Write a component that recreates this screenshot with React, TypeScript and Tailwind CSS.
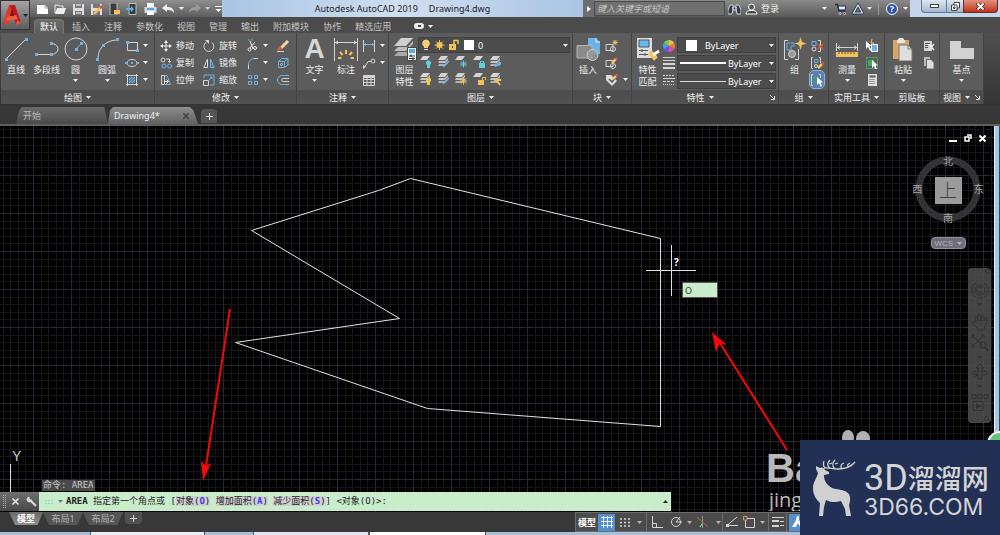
import type { ReactNode } from "react";
import clsx from "clsx";

type IconProps = { w?: number; h?: number; vw?: number; vh?: number; children: ReactNode };

const BLUE = "#6db3e8";
const GREY = "#d4d4d4";
const GOLD = "#f3c15c";

function Icon({ w = 14, h = 14, vw, vh, children }: IconProps) {
  return (
    <svg
      width={w}
      height={h}
      viewBox={`0 0 ${vw ?? w} ${vh ?? h}`}
      fill="none"
      stroke={GREY}
      className="block shrink-0"
      aria-hidden="true"
    >
      {children}
    </svg>
  );
}

function Caret({ className }: { className?: string }) {
  return (
    <svg width="5" height="3" viewBox="0 0 5 3" className={clsx("block shrink-0", className)} aria-hidden="true">
      <path d="M0 0H5L2.5 3Z" fill="currentColor" />
    </svg>
  );
}

/* ---------- Ribbon building blocks ---------- */

function Panel({
  title,
  caret = true,
  launcher = false,
  className,
  children,
}: {
  title: string;
  caret?: boolean;
  launcher?: boolean;
  className: string;
  children: ReactNode;
}) {
  return (
    <section className={clsx("flex shrink-0 flex-col border-r border-[#444] bg-[#5c5c5c]", className)}>
      <div className="flex flex-1 pt-1">{children}</div>
      <div
        className={clsx(
          "relative flex h-[14px] items-center justify-center gap-1 bg-gradient-to-b from-[#4c4c4c] to-[#525252]",
          launcher && "pr-[10px]"
        )}
      >
        <span>{title}</span>
        {caret && <Caret />}
        {launcher && (
          <svg width="5" height="5" viewBox="0 0 5 5" className="absolute right-[3px]" aria-hidden="true">
            <path d="M0 0L4 4M4.500 1V4.500H1" stroke="#ddd" fill="none" />
          </svg>
        )}
      </div>
    </section>
  );
}

function BigButton({
  label,
  label2,
  caret,
  className,
  children,
}: {
  label: string;
  label2?: string;
  caret?: boolean;
  className: string;
  children: ReactNode;
}) {
  return (
    <button type="button" className={clsx("flex shrink-0 flex-col items-center", className)}>
      {children}
      <span className="mt-[3px] leading-[12px]">{label}</span>
      {label2 && <span className="leading-[12px]">{label2}</span>}
      {caret && <Caret className="mt-[3px]" />}
    </button>
  );
}

function SmallButton({
  name,
  text,
  caret,
  active,
  children,
}: {
  name: string;
  text?: boolean;
  caret?: boolean;
  active?: boolean;
  children: ReactNode;
}) {
  return (
    <button
      type="button"
      aria-label={name}
      className={clsx(
        "flex h-[17px] items-center gap-1",
        active && "rounded-sm bg-[#5b7fb5] outline outline-1 outline-[#8eb0dc]"
      )}
    >
      {children}
      {text && <span>{name}</span>}
      {caret && <Caret />}
    </button>
  );
}

/* ---------- Title bar ---------- */

function QuickAccess() {
  return (
    <div className="flex w-[192px] shrink-0 items-center gap-[5px] bg-gradient-to-b from-[#8f8f8f] to-[#5d5d5d] pl-[6px]">
      <button type="button" aria-label="新建">
        <Icon w={13} h={12}>
          <path d="M1 2H9L12 5V11H1Z" fill="#fff" stroke="none" />
          <path d="M9 2V5H12" stroke="#999" />
        </Icon>
      </button>
      <button type="button" aria-label="打开">
        <Icon w={13} h={12}>
          <path d="M1 10V2H4L5 3H9V5" stroke="#eee" />
          <path d="M3 5H12L10 11H1Z" fill="#eee" stroke="none" />
        </Icon>
      </button>
      <button type="button" aria-label="保存">
        <Icon w={13} h={12}>
          <path d="M1 1H12V12H1Z" fill="#dedede" stroke="none" />
          <path d="M3 1H10V5H3ZM3 8H10V12H3Z" fill="#777" stroke="none" />
          <path d="M4 2H9M4 10H9" stroke="#fff" />
        </Icon>
      </button>
      <button type="button" aria-label="另存为">
        <Icon w={13} h={12}>
          <path d="M1 1H12V12H1Z" fill="#dedede" stroke="none" />
          <path d="M3 1H10V5H3ZM3 8H10V12H3Z" fill="#777" stroke="none" />
          <path d="M4 11L11 4" stroke={GOLD} strokeWidth="2.500" />
          <path d="M10 5L12 3" stroke="#e0503c" strokeWidth="2.500" />
        </Icon>
      </button>
      <button type="button" aria-label="从移动设备打开">
        <Icon w={13} h={12}>
          <path d="M2 0H9V12H2Z" fill="#3c3c3c" stroke="#bbb" />
          <path d="M6 7H12V11H6Z" fill={GOLD} stroke="none" />
        </Icon>
      </button>
      <button type="button" aria-label="保存到移动设备">
        <Icon w={13} h={12}>
          <path d="M3 0.500H10V11.500H3Z" fill="#3c3c3c" stroke="#bbb" />
          <path d="M0 5H5V3L8 6L5 9V7H0Z" fill="#58b2f5" stroke="none" />
        </Icon>
      </button>
      <button type="button" aria-label="打印">
        <Icon w={13} h={12}>
          <path d="M3 0H10V4H3Z" fill="#fff" stroke="none" />
          <path d="M0.500 4H12.500V10H0.500Z" fill="#d9d9d9" stroke="none" />
          <path d="M3 5H10V7H3Z" fill="#4fa6e8" stroke="none" />
          <path d="M3 8H10V12H3Z" fill="#fff" stroke="none" />
        </Icon>
      </button>
      <button type="button" aria-label="放弃" className="flex items-center gap-1 text-white">
        <Icon w={13} h={12}>
          <path d="M0 5L5 1V4C9 4 12 5 12 10C10 7 8 7 5 7V9Z" fill="#eee" stroke="none" />
        </Icon>
        <Caret />
      </button>
      <button type="button" aria-label="重做" className="flex items-center gap-1 text-[#ccc]">
        <Icon w={12} h={12}>
          <path d="M12 5L7 1V4C3 4 0 5 0 10C2 7 4 7 7 7V9Z" fill="#9a9a9a" stroke="none" />
        </Icon>
        <Caret />
      </button>
      <button type="button" aria-label="自定义快速访问工具栏">
        <Icon w={7} h={8}>
          <path d="M0 1.500H7" stroke="#fff" />
          <path d="M0.500 4H6.500L3.500 7Z" fill="#fff" stroke="none" />
        </Icon>
      </button>
    </div>
  );
}

function InfoCenter() {
  return (
    <div className="flex w-[327px] shrink-0 items-center whitespace-nowrap bg-gradient-to-b from-[#8a8a8a] to-[#5a5a5a] text-[#f0f0f0]">
      <button type="button" aria-label="折叠搜索" className="flex h-full w-[11px] shrink-0 items-center justify-center bg-[#6d6d6d]">
        <Icon w={4} h={6}>
          <path d="M0 0L4 3L0 6Z" fill="#fff" stroke="none" />
        </Icon>
      </button>
      <input
        aria-label="搜索"
        placeholder="键入关键字或短语"
        className="h-[15px] w-[131px] shrink-0 border border-[#4a4a4a] bg-[#707070] px-[2px] text-[9px] italic placeholder:text-[#c6c6c6]"
      />
      <button type="button" aria-label="查找" className="ml-[3px]">
        <Icon w={13} h={12}>
          <path d="M2 2H5V6L4 11H0V7ZM8 2H11L13 7V11H9L8 6ZM5 4H8V7H5Z" fill="#343b4c" stroke="#d0d4dc" />
        </Icon>
      </button>
      <button type="button" className="ml-1 flex items-center gap-[3px]">
        <Icon w={13} h={12}>
          <circle cx="6.500" cy="4" r="3" fill="#555" stroke="#fff" />
          <path d="M1 11C1 8 3 7.500 6.500 7.500S12 8 12 11Z" fill="#444" stroke="#fff" />
        </Icon>
        登录
        <Caret className="ml-10" />
      </button>
      <button type="button" aria-label="应用商店" className="ml-2">
        <Icon w={12} h={12}>
          <path d="M0 1.500H2.500L4 8H10.500" stroke="#25304a" strokeWidth="1.500" />
          <path d="M3 3H11L10 7H4Z" fill="#dfe4ee" stroke="#25304a" />
          <circle cx="5" cy="10.500" r="1" fill="#25304a" />
          <circle cx="9.500" cy="10.500" r="1" fill="#25304a" />
        </Icon>
      </button>
      <button type="button" aria-label="保持连接" className="ml-[5px] flex items-center gap-[3px]">
        <Icon w={12} h={12}>
          <path d="M6 2L10.500 10H1.500Z" stroke="#2c3854" strokeWidth="3" />
          <path d="M6 2L10.500 10H1.500Z" stroke="#e6e9f0" strokeWidth="1.200" />
        </Icon>
        <Caret />
      </button>
      <span className="ml-[6px] h-3 w-px bg-[#999]" />
      <button type="button" aria-label="帮助" className="ml-[7px] flex items-center gap-[5px]">
        <span className="flex h-[12px] w-[12px] items-center justify-center rounded-full border border-white bg-[#2a55a8] text-[9px] font-bold leading-none text-white">
          ?
        </span>
        <Caret />
      </button>
    </div>
  );
}

function WindowControls() {
  return (
    <div className="flex w-[90px] shrink-0 items-start justify-end bg-[#c3d6ec] pr-[2px]">
      <button type="button" aria-label="最小化" className="flex h-[13px] w-[26px] items-center justify-center rounded-bl border border-t-0 border-[#66788c] bg-gradient-to-b from-[#dde8f4] to-[#a3b8cf]">
        <span className="h-[4px] w-[9px] border border-[#444] bg-white" />
      </button>
      <button type="button" aria-label="还原" className="flex h-[13px] w-[16px] items-center justify-center border-b border-[#66788c] bg-gradient-to-b from-[#dde8f4] to-[#a3b8cf]">
        <Icon w={9} h={9}>
          <path d="M3 0.500H8.500V6H3Z" fill="#fff" stroke="#444" />
          <path d="M0.500 3H6V8.500H0.500Z" fill="#fff" stroke="#444" />
          <path d="M2.500 5H4V6.500H2.500Z" stroke="#444" />
        </Icon>
      </button>
      <button type="button" aria-label="关闭" className="flex h-[13px] w-[35px] items-center justify-center rounded-br border border-t-0 border-[#6b2b22] bg-gradient-to-b from-[#e0917c] to-[#bd2f18]">
        <Icon w={9} h={7}>
          <path d="M1 0L8 7M8 0L1 7" stroke="#5c2a26" strokeWidth="3.500" />
          <path d="M1.500 0.500L7.500 6.500M7.500 0.500L1.500 6.500" stroke="#fff" strokeWidth="2" />
        </Icon>
      </button>
    </div>
  );
}

const ribbonTabs = ["插入", "注释", "参数化", "视图", "管理", "输出", "附加模块", "协作", "精选应用"];

function Header() {
  return (
    <header className="flex h-[33px] bg-[#4b4b4b]">
      <button
        type="button"
        aria-label="应用程序菜单"
        className="flex h-[30px] w-[30px] shrink-0 items-center justify-center gap-[1px] border border-[#333] bg-gradient-to-b from-[#a5a5a5] to-[#5e5e5e] text-[#222]"
      >
        <svg width="19" height="21" viewBox="0 0 19 21" aria-hidden="true">
          <path d="M6 0H11L5 20L0 18Z" fill="#e0392b" />
          <path d="M7 0H12L18 18L13 20Z" fill="#b81f1c" />
          <path d="M4 12L13 10L15 14L3 16Z" fill="#ee5a45" />
          <path d="M9 4L7 11H11Z" fill="#7d1212" />
          <path d="M13 20L18 18L14 15Z" fill="#e8604c" />
        </svg>
        <Caret />
      </button>
      <div className="flex min-w-0 flex-1 flex-col">
        <div className="flex h-[17px]">
          <QuickAccess />
          <div className="flex flex-1 items-center justify-center gap-[11px] whitespace-nowrap bg-gradient-to-r from-[#a9c4e4] via-[#cfdff1] to-[#a9c4e4] text-[#1c1c1c]">
            <span>Autodesk AutoCAD 2019</span>
            <span>Drawing4.dwg</span>
          </div>
          <InfoCenter />
          <WindowControls />
        </div>
        <nav className="flex h-4 items-end gap-[14px] pl-1 text-[#c4c4c4]">
          <button type="button" className="-mr-[6px] h-[14px] rounded-t-sm border border-b-0 border-[#777] bg-gradient-to-b from-[#6c6c6c] to-[#5c5c5c] px-[5px] text-white">
            默认
          </button>
          {ribbonTabs.map((tab) => (
            <button key={tab} type="button" className="h-[14px]">
              {tab}
            </button>
          ))}
          <button type="button" aria-label="最小化功能区" className="ml-[9px] flex h-[14px] items-center gap-1 text-white">
            <span className="flex h-[6px] w-[10px] items-center justify-center rounded-sm bg-[#eee]">
              <span className="h-[2px] w-[3px] bg-[#444]" />
            </span>
            <Caret />
          </button>
        </nav>
      </div>
    </header>
  );
}

/* ---------- Ribbon panels ---------- */

function DrawPanel() {
  return (
    <Panel title="绘图" className="w-[154px]">
      <BigButton label="直线" className="w-[30px]">
        <Icon w={24} h={24}>
          <path d="M2 22L22 2" />
          <path d="M1 21h3v3H1ZM21 1h3v3h-3Z" fill={BLUE} stroke="none" />
        </Icon>
      </BigButton>
      <BigButton label="多段线" className="w-[31px]">
        <Icon w={24} h={24}>
          <path d="M1 17.500H16C20 17.500 23 15 23 12S20 6.500 16 6.500" />
          <path d="M0 16h3v3H0ZM15 16h3v3h-3ZM15 5h3v3h-3Z" fill={BLUE} stroke="none" />
        </Icon>
      </BigButton>
      <BigButton label="圆" caret className="w-[27px]">
        <Icon w={24} h={24}>
          <circle cx="12" cy="12" r="11" />
          <path d="M12 12L17 7" stroke={BLUE} />
          <path d="M11 11h3v3h-3ZM16 5h3v3h-3Z" fill={BLUE} stroke="none" />
        </Icon>
      </BigButton>
      <BigButton label="圆弧" caret className="w-[36px]">
        <Icon w={24} h={24}>
          <path d="M3 21C3 11 11 3 22 3" />
          <path d="M1 21h3v3H1ZM7 7h3v3H7ZM21 1h3v3h-3Z" fill={BLUE} stroke="none" />
        </Icon>
      </BigButton>
      <div className="flex flex-col">
        <SmallButton name="矩形" caret>
          <Icon>
            <path d="M2.500 3.500H12.500V11.500H2.500Z" />
            <path d="M1 2h3v3H1ZM11 10h3v3h-3Z" fill={BLUE} stroke="none" />
          </Icon>
        </SmallButton>
        <SmallButton name="椭圆" caret>
          <Icon>
            <ellipse cx="7" cy="7" rx="5" ry="3.500" />
            <path d="M0 6h2v2H0ZM12 6h2v2h-2ZM6 6h2v2H6Z" fill={BLUE} stroke="none" />
          </Icon>
        </SmallButton>
        <SmallButton name="图案填充" caret>
          <Icon>
            <path d="M1 2.500H13M1 11.500H13M2.500 1V13M11.500 1V13" />
            <path d="M4 4H10V10H4Z" fill="#4d86b5" stroke="none" />
            <path d="M4 7L7 4M4 10L10 4M7 10L10 7" stroke={BLUE} />
          </Icon>
        </SmallButton>
      </div>
    </Panel>
  );
}

function ModifyPanel() {
  return (
    <Panel title="修改" className="w-[142px]">
      <div className="ml-[5px] flex w-[43px] flex-col">
        <SmallButton name="移动" text>
          <Icon w={12} h={12}>
            <path d="M6 1V11M1 6H11" stroke="#eee" />
            <path d="M6 0L8 3H4ZM6 12L8 9H4ZM0 6L3 4V8ZM12 6L9 4V8Z" fill="#eee" stroke="none" />
          </Icon>
        </SmallButton>
        <SmallButton name="复制" text>
          <Icon w={12} h={12}>
            <circle cx="3" cy="3" r="2" />
            <circle cx="4" cy="9" r="2" stroke={BLUE} />
            <circle cx="9.500" cy="9" r="2" stroke={BLUE} />
            <path d="M6 2H9.500V5M8 4L9.500 5.500L11 4" />
          </Icon>
        </SmallButton>
        <SmallButton name="拉伸" text>
          <Icon w={12} h={12}>
            <path d="M1.500 1.500H4.500V10.500H1.500Z" />
            <path d="M5 1.500H7L10.500 10.500H4" stroke={BLUE} />
            <path d="M4 7.500H8M6.500 5.500L8.500 7.500L6.500 9.500" stroke="#eee" />
          </Icon>
        </SmallButton>
      </div>
      <div className="flex w-[42px] flex-col">
        <SmallButton name="旋转" text>
          <Icon w={12} h={12}>
            <path d="M9 2.500A5 5 0 1 1 3.500 2" />
            <path d="M2 0H6V4Z" fill={GREY} stroke="none" />
          </Icon>
        </SmallButton>
        <SmallButton name="镜像" text>
          <Icon w={12} h={12}>
            <path d="M4.500 2V10.500H0.800Z" />
            <path d="M7.500 2V10.500H11.200Z" stroke={BLUE} fill="#3f7fb5" />
          </Icon>
        </SmallButton>
        <SmallButton name="缩放" text>
          <Icon w={12} h={12}>
            <path d="M1 4V1H11V11H7" stroke={BLUE} />
            <path d="M0.500 6.500H5.500V11.500H0.500Z" />
            <path d="M6 6L9 3M7 3H9V5" stroke={BLUE} />
          </Icon>
        </SmallButton>
      </div>
      <div className="flex w-[31px] flex-col">
        <SmallButton name="修剪" caret>
          <Icon>
            <path d="M3 1H8" stroke={BLUE} strokeDasharray="2 1" />
            <path d="M5 2L8 10M10 3L5 9" stroke="#eee" />
            <circle cx="4.500" cy="10.500" r="1.500" stroke="#eee" />
            <circle cx="10" cy="9" r="1.500" stroke="#eee" />
          </Icon>
        </SmallButton>
        <SmallButton name="圆角" caret>
          <Icon>
            <path d="M3.500 13V9" />
            <path d="M3.500 9C3.500 5 6 2.500 9 2.500" stroke={BLUE} />
            <path d="M9 2.500H13" />
          </Icon>
        </SmallButton>
        <SmallButton name="阵列" caret>
          <Icon>
            <path d="M3.500 2.500h3v3h-3ZM9.500 2.500h3v3h-3ZM3.500 8.500h3v3h-3ZM9.500 8.500h3v3h-3Z" stroke={BLUE} />
          </Icon>
        </SmallButton>
      </div>
      <div className="flex flex-col">
        <SmallButton name="删除">
          <Icon>
            <path d="M5 9L12 2" stroke="#f0d9a0" strokeWidth="3" />
            <path d="M2 11L5 8" stroke="#e2563f" strokeWidth="3" />
            <path d="M1 12.500H8" />
          </Icon>
        </SmallButton>
        <SmallButton name="分解">
          <Icon>
            <path d="M2.500 5.500H8.500V11.500H2.500Z" stroke={BLUE} />
            <path d="M2.500 5.500L5.500 2.500H12V9L8.500 11.500M8.500 5.500L12 2.500" stroke={BLUE} />
            <circle cx="5.500" cy="8.500" r="1" />
          </Icon>
        </SmallButton>
        <SmallButton name="偏移">
          <Icon>
            <path d="M13 2.500H6C3 2.500 1.500 5 1.500 7S3 11.500 6 11.500H13" stroke={BLUE} />
            <path d="M13 5.500H7C5 5.500 5 8.500 7 8.500H13" />
          </Icon>
        </SmallButton>
      </div>
    </Panel>
  );
}

function AnnotatePanel() {
  return (
    <Panel title="注释" className="w-[92px]">
      <BigButton label="文字" caret className="ml-[2px] w-[31px]">
        <span className="h-[24px] font-['Liberation_Sans',sans-serif] text-[28px] font-bold leading-[24px] text-[#d6d6d6]">A</span>
      </BigButton>
      <BigButton label="标注" className="w-[32px]">
        <Icon w={24} h={24}>
          <path d="M0.500 1V24M23.500 1V24M1 5.500H23" />
          <path d="M1 5.500L4 3.500V7.500ZM23 5.500L20 3.500V7.500Z" fill={GREY} stroke="none" />
          <path d="M12 13V17M6 15L8.500 18M18 15L15.500 18M4 21H7.500M16.500 21H20" stroke={GOLD} strokeWidth="2" />
        </Icon>
      </BigButton>
      <div className="flex flex-col">
        <SmallButton name="线性" caret>
          <Icon>
            <path d="M1.500 1V13M12.500 1V13" />
            <path d="M2 5.500H12M4 4L2.500 5.500L4 7M10 4L11.500 5.500L10 7" stroke={BLUE} />
          </Icon>
        </SmallButton>
        <SmallButton name="引线" caret>
          <Icon>
            <path d="M2 12L6 5.500H9" />
            <circle cx="11" cy="5" r="2" />
            <path d="M1 13V9L4 11Z" fill={GREY} stroke="none" />
          </Icon>
        </SmallButton>
        <SmallButton name="表格">
          <Icon>
            <path d="M1.500 2.500H12.500V12.500H1.500ZM1.500 6.500H12.500M1.500 9.500H12.500M5 5V12M9 5V12" />
            <path d="M1 2H13V5H1Z" fill={GREY} stroke="none" />
          </Icon>
        </SmallButton>
      </div>
    </Panel>
  );
}

function LayerGlyph({ kind }: { kind: string }) {
  const stacked = kind === "match" || kind === "on" || kind === "thaw" || kind === "current" || kind === "previous";
  return (
    <Icon>
      <path d="M4 1H11L8 5H1Z" fill={GREY} stroke="none" />
      {stacked && (
        <>
          <path d="M2 6H8L11 3V5L8 8H1Z" fill="#c4c4c4" stroke="none" />
          <path d="M2 9H8L11 6V8L8 11H1Z" fill="#b4b4b4" stroke="none" />
        </>
      )}
      {kind === "off" && <path d="M8 10a2.500 2.500 0 1 1 3 0v3h-3v-3Z" fill="#5fd0e0" stroke="none" />}
      {kind === "on" && <path d="M8 10a2.500 2.500 0 1 1 3 0v3h-3v-3Z" fill={GOLD} stroke="none" />}
      {kind === "freeze" && <path d="M9.500 5.500V12.500M6 9H13M7 6.500L12 11.500M12 6.500L7 11.500" stroke="#5fd0e0" />}
      {kind === "thaw" && <path d="M9.500 5.500V12.500M6 9H13M7 6.500L12 11.500M12 6.500L7 11.500" stroke={GOLD} />}
      {kind === "lock" && (
        <>
          <path d="M7 8H13V13H7Z" fill="#5fd0e0" stroke="none" />
          <path d="M8.500 8V6.500H11.500V8" stroke="#5fd0e0" />
        </>
      )}
      {kind === "unlock" && (
        <>
          <path d="M6 8H12V13H6Z" fill={GOLD} stroke="none" />
          <path d="M10.500 8V5.500H13.500V8" stroke={GOLD} />
        </>
      )}
      {kind === "match" && <path d="M6 12L12 6" stroke={BLUE} strokeWidth="1.500" />}
      {kind === "current" && <path d="M5 9L12 7V10L6 12Z" fill={BLUE} stroke="none" />}
      {kind === "previous" && <path d="M5 8H12M8 9L11 13" stroke={GOLD} strokeWidth="2" />}
    </Icon>
  );
}

const layerTools = [
  { name: "关闭", kind: "off" },
  { name: "隔离", kind: "match" },
  { name: "冻结", kind: "freeze" },
  { name: "锁定", kind: "lock" },
  { name: "置为当前", kind: "current" },
  { name: "打开所有图层", kind: "on" },
  { name: "取消隔离", kind: "match" },
  { name: "解冻所有图层", kind: "thaw" },
  { name: "解锁", kind: "unlock" },
  { name: "匹配图层", kind: "previous" },
];

function LayersPanel() {
  return (
    <Panel title="图层" className="w-[184px]">
      <BigButton label="图层" label2="特性" className="ml-[2px] w-[27px]">
        <Icon w={24} h={24}>
          <path d="M8 1H20L13 9H1Z" fill="#cfcfcf" stroke="none" />
          <path d="M5 10H15L20 4V7L13 14H1Z" fill="#bdbdbd" stroke="none" />
          <path d="M5 15H14V19H1Z" fill="#a9a9a9" stroke="none" />
          <path d="M14.500 10.500H23.500V23.500H14.500Z" fill="#eee" stroke="#444" />
          <path d="M16 12H22V16H16Z" fill="#58a9ee" stroke="none" />
          <path d="M16 19H22M18 17.500V20M16 21.500H22M20 20.500V23" stroke="#333" />
        </Icon>
      </BigButton>
      <div className="flex flex-1 flex-col">
        <div className="relative mr-[2px] h-[16px]">
          <select
            aria-label="图层"
            className="h-full w-full appearance-none border border-[#404040] bg-[#4c4c4c] pl-[59px] text-[9px] text-white"
          >
            <option>0</option>
          </select>
          <div className="pointer-events-none absolute inset-0 flex items-center gap-[3px] pl-[3px] pr-[2px]">
            <Icon w={10} h={12}>
              <path d="M5 0.500a3.800 3.800 0 0 1 2 7V9H3V7.500A3.800 3.800 0 0 1 5 0.500Z" fill="#fbcf73" stroke="none" />
              <path d="M3 10.500H7" />
            </Icon>
            <Icon w={11} h={12}>
              <circle cx="5.500" cy="6" r="3" fill={GOLD} stroke="none" />
              <path d="M5.500 1V11M0.500 6H10.500M2 2.500L9 9.500M9 2.500L2 9.500" stroke={GOLD} />
            </Icon>
            <Icon w={11} h={12}>
              <path d="M1 5H8V11H1Z" fill={GOLD} stroke="none" />
              <path d="M6 5V1.500H10V5" stroke={GOLD} strokeWidth="1.500" />
              <path d="M4.500 7V9" stroke="#444" />
            </Icon>
            <span className="ml-[2px] h-[10px] w-[10px] bg-white" />
            <span className="flex-1" />
            <Caret />
          </div>
        </div>
        <div className="grid w-[89px] grid-cols-5 pl-px">
          {layerTools.map((tool) => (
            <SmallButton key={tool.name} name={tool.name}>
              <LayerGlyph kind={tool.kind} />
            </SmallButton>
          ))}
        </div>
      </div>
    </Panel>
  );
}

function BlockPanel() {
  return (
    <Panel title="块" className="w-[59px]">
      <BigButton label="插入" className="ml-[2px] w-[26px]">
        <Icon w={24} h={24}>
          <path d="M12 1H20L24 5V17H12Z" fill={BLUE} stroke="none" />
          <path d="M20 1V5H24" stroke="#d7ecfb" />
          <path d="M1 8.500H16V21H1Z" fill="#8a8a8a" stroke="#b5b5b5" />
          <circle cx="16.500" cy="18" r="5.500" fill="#9a9a9a" fillOpacity="0.800" stroke="#ccc" />
        </Icon>
      </BigButton>
      <div className="ml-[4px] flex flex-col">
        <SmallButton name="创建">
          <Icon>
            <path d="M1 5.500H8V11.500H1Z" />
            <circle cx="8" cy="10" r="2.500" />
            <path d="M10 1V6M7.500 3.500H12.500M8 1.500L12 5.500M12 1.500L8 5.500" stroke={GOLD} />
          </Icon>
        </SmallButton>
        <SmallButton name="编辑">
          <Icon>
            <path d="M1 4.500H8V10.500H1Z" />
            <circle cx="8" cy="10" r="2.500" />
            <path d="M7 7L11 3" stroke={GOLD} strokeWidth="2.500" />
            <path d="M10.500 3.500L12 2" stroke="#e2563f" strokeWidth="2.500" />
          </Icon>
        </SmallButton>
        <SmallButton name="编辑属性" caret>
          <Icon>
            <path d="M1 2H6L12 8L7 13L1 7Z" fill="#ddd" stroke="none" />
            <path d="M4 6L7 9L12 3" stroke="#555" strokeWidth="1.500" />
            <path d="M8 6L11 3" stroke={GOLD} strokeWidth="2.500" />
            <path d="M11 3L12.500 1.500" stroke="#e2563f" strokeWidth="2.500" />
          </Icon>
        </SmallButton>
      </div>
    </Panel>
  );
}

function PropertySelect({ name, line }: { name: string; line?: string }) {
  return (
    <div className="relative h-[16px]">
      <select
        aria-label={name}
        className={clsx(
          "h-full w-full appearance-none border border-[#404040] bg-[#4c4c4c] text-[9px] text-white",
          line ? "pl-[50px]" : "pl-[27px]"
        )}
      >
        <option>ByLayer</option>
      </select>
      <div className="pointer-events-none absolute inset-0 flex items-center justify-between pl-[3px] pr-[2px]">
        {line ? <span className={clsx("w-[46px]", line)} /> : <span className="ml-[6px] h-[11px] w-[11px] bg-white" />}
        <Caret />
      </div>
    </div>
  );
}

function PropertiesPanel() {
  return (
    <Panel title="特性" launcher className="w-[147px]">
      <BigButton label="特性" label2="匹配" className="ml-[3px] w-[25px]">
        <Icon w={24} h={24}>
          <path d="M1 1H16V21H1Z" fill="#dcdcdc" stroke="none" />
          <path d="M3 3H13V10H3Z" fill="#69b7f2" stroke="#555" />
          <path d="M3 13.500H12M3 17.500H12M6 12V15M9 16V19" stroke="#555" />
          <path d="M14 15L20 22" stroke={GOLD} strokeWidth="5" />
          <path d="M17 18L23 14" stroke="#fff" strokeWidth="3" />
        </Icon>
      </BigButton>
      <div className="flex w-[17px] flex-col items-center">
        <SmallButton name="颜色">
          <Icon w={12} h={12}>
            <path d="M6 6V0A6 6 0 0 1 11.200 3Z" fill="#f5c23d" stroke="none" />
            <path d="M6 6L11.200 3A6 6 0 0 1 11.200 9Z" fill="#ee7d37" stroke="none" />
            <path d="M6 6L11.200 9A6 6 0 0 1 6 12Z" fill="#dc4dae" stroke="none" />
            <path d="M6 6V12A6 6 0 0 1 0.800 9Z" fill="#6d55e0" stroke="none" />
            <path d="M6 6L0.800 9A6 6 0 0 1 0.800 3Z" fill="#39a5e8" stroke="none" />
            <path d="M6 6L0.800 3A6 6 0 0 1 6 0Z" fill="#6ccb51" stroke="none" />
          </Icon>
        </SmallButton>
        <SmallButton name="线宽">
          <Icon w={12} h={12}>
            <path d="M0 0.500H12M0 3.500H12" />
            <path d="M0 7H12M0 11H12" strokeWidth="2" />
          </Icon>
        </SmallButton>
        <SmallButton name="线型">
          <Icon w={12} h={12}>
            <path d="M0 1.500H12" strokeDasharray="2 1" />
            <path d="M0 4.500H12" />
            <path d="M0 7.500H12" strokeDasharray="3 1" />
            <path d="M0 10.500H12" strokeDasharray="1 1" />
          </Icon>
        </SmallButton>
      </div>
      <div className="mr-[2px] flex flex-1 flex-col gap-[2px]">
        <PropertySelect name="对象颜色" />
        <PropertySelect name="线宽" line="h-[2px] bg-white" />
        <PropertySelect name="线型" line="h-px bg-[#ddd]" />
      </div>
    </Panel>
  );
}

function TrailingPanels() {
  return (
    <>
      <Panel title="组" className="w-[50px]">
        <BigButton label="组" className="ml-[3px] w-[25px]">
          <Icon w={24} h={24}>
            <path d="M5 3.500H1.500V22.500H5M12 22.500H15.500V12" />
            <path d="M4 6H11V9H8V13H4Z" stroke={BLUE} />
            <circle cx="9" cy="17" r="3.500" fill="#999" />
            <path d="M17.500 0L19 5L23.500 6.500L19 8L17.500 13L16 8L11.500 6.500L16 5Z" fill={GOLD} stroke="none" />
          </Icon>
        </BigButton>
        <div className="ml-[3px] flex flex-col">
          <SmallButton name="解除编组">
            <Icon>
              <path d="M2 2.500h4v4H2Z" stroke={BLUE} />
              <circle cx="4" cy="10" r="2" />
              <path d="M8 1.500H10.500V12.500H8" />
              <path d="M8 5L13 10M13 5L8 10" stroke="#e2563f" strokeWidth="1.500" />
            </Icon>
          </SmallButton>
          <SmallButton name="组编辑">
            <Icon>
              <path d="M3 1.500H1.500V12.500H3M9 1.500H10.500V7" />
              <path d="M4.500 3.500H8V6.500H4.500Z" stroke={BLUE} />
              <circle cx="6" cy="10" r="1.500" />
              <path d="M8 12L12 8" stroke={GOLD} strokeWidth="2.500" />
              <path d="M12 8L13.500 6.500" stroke="#e2563f" strokeWidth="2.500" />
            </Icon>
          </SmallButton>
          <SmallButton name="启用组选择" active>
            <Icon>
              <path d="M3 1.500H1.500V12.500H3M9 1.500H10.500V5" />
              <path d="M4 3H8V6H4ZM4 8H7V11H4Z" fill="#3fa35c" stroke="none" />
              <path d="M7 4V12L9 10L10.500 13.500L12 13L10.500 9.500H13Z" fill="#fff" stroke="none" />
            </Icon>
          </SmallButton>
        </div>
      </Panel>
      <Panel title="实用工具" className="w-[56px]">
        <BigButton label="测量" caret className="ml-[4px] w-[28px]">
          <Icon w={24} h={24}>
            <path d="M1.500 6V14M22.500 6V14M2 10.500H22M5 8.500L2.500 10.500L5 12.500M19 8.500L21.500 10.500L19 12.500" />
            <path d="M1 15H23V20H1Z" fill={GOLD} stroke="none" />
            <path d="M4 15V17M7 15V17M10 15V17M13 15V17M16 15V17M19 15V17" stroke="#6b552a" />
          </Icon>
        </BigButton>
        <div className="ml-[4px] flex flex-col">
          <SmallButton name="快速选择">
            <Icon>
              <path d="M1 2V10L3 8L5 12L6.500 11L4.500 7H7Z" fill="#fff" stroke="none" />
              <path d="M6.500 5.500H12.500V12.500H6.500Z" fill={BLUE} stroke="#fff" />
              <path d="M7 0L6 4H9L7 6" stroke={GOLD} />
            </Icon>
          </SmallButton>
          <SmallButton name="全部选择">
            <Icon>
              <path d="M1.500 1.500H12.500V12.500H1.500Z" stroke="#45bd68" strokeDasharray="2 1" />
              <path d="M3 4H9V10H3Z" fill="#45a862" stroke="none" />
              <path d="M7 4V12L9 10L10 13H12L10.500 9.500H13Z" fill="#fff" stroke="none" />
            </Icon>
          </SmallButton>
          <SmallButton name="快速计算器">
            <Icon>
              <path d="M3 1H12V13H3Z" fill="#ddd" stroke="none" />
              <path d="M4.500 3.500H10.500" stroke="#555" strokeWidth="2" />
              <path d="M4.500 6.500H10.500M4.500 8.500H10.500M4.500 10.500H10.500" stroke="#555" strokeDasharray="1 1" />
            </Icon>
          </SmallButton>
        </div>
      </Panel>
      <Panel title="剪贴板" caret={false} className="w-[55px]">
        <BigButton label="粘贴" caret className="ml-[3px] w-[30px]">
          <Icon w={24} h={24}>
            <path d="M2 3H18V22H2Z" fill="#d7a566" stroke="none" />
            <path d="M6 4L8 1H12L14 4V6H6Z" fill="#e8e8e8" stroke="none" />
            <path d="M8 8H17L21 12V24H8Z" fill="#dedede" stroke="#777" />
            <path d="M17 8V12H21" stroke="#777" />
          </Icon>
        </BigButton>
        <div className="ml-[4px] flex flex-col">
          <SmallButton name="剪切">
            <Icon>
              <path d="M2 2H10V12H2Z" fill="#d0d0d0" stroke="none" />
              <path d="M3 4.500H8M3 6.500H6M3 8.500H6" stroke="#555" />
              <path d="M7 5L12 11M12 5L7 11" stroke="#eee" strokeWidth="1.500" />
            </Icon>
          </SmallButton>
          <SmallButton name="复制剪裁">
            <Icon>
              <path d="M2 1H8V10H2Z" fill="#bbb" stroke="none" />
              <path d="M4.500 3.500H9L12 6.500V13H4.500Z" fill="#ddd" stroke="#666" />
            </Icon>
          </SmallButton>
        </div>
      </Panel>
      <Panel title="视图" launcher className="w-[44px]">
        <BigButton label="基点" caret className="w-[43px]">
          <Icon w={24} h={24}>
            <path d="M0 4H11V11H24V22H0Z" fill="#d2d2d2" stroke="none" />
          </Icon>
        </BigButton>
      </Panel>
    </>
  );
}

function FileTabs() {
  return (
    <div className="flex h-[21px] items-end border-b-2 border-[#5f5f5f] bg-[#363636] pl-4 text-[#b9b9b9]">
      <button type="button" className="h-[17px] w-[92px] bg-gradient-to-b from-[#6a6a6a] to-[#4a4a4a] pl-[7px] text-left [clip-path:polygon(0_100%,3px_20%,6px_0,96%_0,100%_100%)]">
        开始
      </button>
      <div className="flex h-[17px] w-[90px] items-center justify-between bg-gradient-to-b from-[#8d8d8d] to-[#626262] pl-[6px] pr-[9px] text-[#f2f2f2] [clip-path:polygon(0_100%,2px_20%,5px_0,91%_0,95%_20%,100%_100%)]">
        <button type="button">Drawing4*</button>
        <button type="button" aria-label="关闭图形">
          <Icon w={6} h={6}>
            <path d="M0 0L6 6M6 0L0 6" stroke="#444" strokeWidth="1.500" />
          </Icon>
        </button>
      </div>
      <button type="button" aria-label="新图形" className="mb-px ml-[3px] flex h-[14px] w-4 items-center justify-center rounded-t bg-[#555]">
        <Icon w={7} h={7}>
          <path d="M3.500 0V7M0 3.500H7" />
        </Icon>
      </button>
    </div>
  );
}

/* ---------- Drawing area ---------- */

function Drawing() {
  return (
    <svg className="absolute inset-0 h-full w-full" aria-hidden="true">
      <defs>
        <pattern id="grid" x="33" y="11" width="38" height="38" patternUnits="userSpaceOnUse">
          <path d="M8.500 0V38M15.500 0V38M23.500 0V38M30.500 0V38M0 8.500H38M0 15.500H38M0 23.500H38M0 30.500H38" stroke="#15151a" />
          <path d="M0.500 0V38M0 0.500H38" stroke="#272732" />
        </pattern>
      </defs>
      <rect width="100%" height="100%" fill="url(#grid)" />
      <g fill="none" stroke="#e2e2e2">
        <path d="M251.500 104.500L378.500 64.500L410.500 52.500L660.500 112.500V300.500L427.500 282.500L235.500 216.500L399.500 192.500Z" />
        <path d="M646 144.500H696M671.500 119V170" />
        <path d="M10.500 338V367" />
      </g>
      <g stroke="#f40808" strokeWidth="2" fill="#f40808">
        <path d="M230 183L206 340" />
        <path d="M203 355L201 335L206 340L211 337Z" stroke="none" />
        <path d="M787 324L720 217" />
        <path d="M712 206L727 219L720 217L716 226Z" stroke="none" />
      </g>
    </svg>
  );
}

function ViewCube() {
  return (
    <div className="absolute right-[9px] top-[27px] flex w-[74px] flex-col items-center text-[10px] text-[#a9a9a9]">
      <div className="relative grid h-[74px] w-[74px] grid-cols-3 grid-rows-3 place-items-center">
        <svg className="absolute inset-0" width="74" height="74" aria-hidden="true">
          <circle cx="37" cy="36" r="29" fill="none" stroke="#333335" strokeWidth="7" />
        </svg>
        <span className="relative col-start-2 row-start-1 -mt-2">北</span>
        <span className="relative col-start-1 row-start-2 mr-3">西</span>
        <button type="button" className="relative col-start-2 row-start-2 h-[27px] w-[27px] bg-[#9b9b9b] text-[18px] font-light leading-[25px] text-[#3f3f46]">
          上
        </button>
        <span className="relative col-start-3 row-start-2 ml-3">东</span>
        <span className="relative col-start-2 row-start-3 -mb-2">南</span>
      </div>
      <button type="button" className="mt-[10px] flex h-[12px] w-[35px] items-center justify-between rounded border border-[#9292a0] bg-[#6e6e7a] px-[3px] font-['Liberation_Sans',sans-serif] text-[8px] text-[#b4b4bc]">
        WCS
        <Caret />
      </button>
    </div>
  );
}

function NavigationBar() {
  return (
    <div className="absolute right-[3px] top-[142px] flex h-[155px] w-[23px] flex-col items-center rounded bg-[#505050]/85 pt-[13px] text-[#333]">
      <span className="absolute right-[1px] top-[1px] h-[5px] w-[5px] rounded-full border border-[#333]" />
      <button type="button" aria-label="全导航控制盘">
        <Icon w={18} h={18}>
          <path d="M5 2A8 8 0 0 0 5 16M13 2A8 8 0 0 1 13 16M6 17H12" stroke="#333" />
          <circle cx="9" cy="9" r="5" stroke="#333" />
          <path d="M11 7A3 3 0 1 0 11 11" stroke="#333" />
        </Icon>
      </button>
      <Caret className="mt-[4px]" />
      <button type="button" aria-label="平移" className="mt-[7px]">
        <Icon w={18} h={18}>
          <path d="M6 15L1 9C2 7 4 9 5 10L4 4C5 2 6 3 7 8V2C8 0 9 1 10 8L11 2C12 1 13 2 13 8L15 5C16 4 17 5 16 7L14 13L13 17H7Z" stroke="#333" />
        </Icon>
      </button>
      <button type="button" aria-label="范围缩放" className="mt-[3px]">
        <Icon w={18} h={18}>
          <path d="M2 2L12 12M12 2L2 12M1 4V1H4M10 1H13V4M1 10V13H4" stroke="#2f2f2f" />
          <circle cx="12" cy="11" r="3" stroke="#2f2f2f" />
          <path d="M14 13L17 17" stroke="#2f2f2f" strokeWidth="2" />
        </Icon>
      </button>
      <Caret className="mt-[4px]" />
      <button type="button" aria-label="动态观察" className="mt-[4px]">
        <Icon w={18} h={18}>
          <path d="M7 5H5L9 1L13 5H11V16H7Z" stroke="#2f2f2f" />
          <path d="M5 8C0 9 0 12 6 12M12 8C18 9 18 12 12 12M4 10L6 12L4 14" stroke="#2f2f2f" />
        </Icon>
      </button>
      <Caret className="mt-[4px]" />
      <button type="button" aria-label="ShowMotion" className="mt-[5px]">
        <Icon w={18} h={18}>
          <path d="M1 1.500h4v4H1ZM7 1.500h4v4H7ZM13 1.500h4v4h-4ZM2 8.500H12V17.500H2Z" stroke="#333" />
          <path d="M5 10V16L10 13Z" fill="#333" stroke="none" />
        </Icon>
      </button>
      <span className="absolute bottom-[2px] right-[2px] h-[5px] w-[5px] rounded-full border border-[#333]" />
    </div>
  );
}

function CommandLine() {
  return (
    <div className="absolute bottom-px left-0 flex h-[19px] w-[671px] items-center bg-[#c9edcb] font-['DejaVu_Sans_Mono','Noto_Sans_CJK_SC',monospace] text-[9px] text-[#222]">
      <div className="flex h-full w-[39px] shrink-0 items-center gap-[7px] bg-gradient-to-b from-[#6f6f6f] to-[#484848] pl-[3px]">
        <span className="h-[13px] w-[3px] border-x border-dotted border-[#aaa]" />
        <button type="button" aria-label="关闭命令行" className="-ml-px">
          <Icon w={7} h={7}>
            <path d="M0.500 0.500L6.500 6.500M6.500 0.500L0.500 6.500" stroke="#eee" strokeWidth="1.500" />
          </Icon>
        </button>
        <button type="button" aria-label="自定义">
          <Icon w={11} h={11}>
            <path d="M5 5L10 10" stroke="#ddd" strokeWidth="2" />
            <path d="M3 1A2.500 2.500 0 1 0 6 4L4 4L3 3Z" fill="#ddd" stroke="#ddd" />
          </Icon>
        </button>
      </div>
      <button type="button" aria-label="最近使用的命令" className="ml-[6px] flex w-[21px] items-center gap-1 text-[#777]">
        <Icon w={9} h={6}>
          <path d="M0 1.500H9M0 4.500H9" stroke="#8fd6dc" strokeDasharray="2 1" />
        </Icon>
        <Caret />
      </button>
      <p className="flex-1 whitespace-pre">
        <b>AREA</b> 指定第一个角点或 [<span className="bg-[#d0d0d0]">对象(<b className="text-[#3a3af0]">O</b>)</span>{" "}
        <span className="bg-[#d0d0d0]">增加面积(<b className="text-[#3a3af0]">A</b>)</span>{" "}
        <span className="bg-[#d0d0d0]">减少面积(<b className="text-[#3a3af0]">S</b>)</span>] &lt;对象(O)&gt;:
      </p>
      <button type="button" aria-label="展开历史记录" className="mr-[3px]">
        <Caret className="rotate-180" />
      </button>
    </div>
  );
}

function Canvas() {
  return (
    <main className="flex flex-1">
      <div className="relative min-h-[386px] flex-1 overflow-hidden bg-black">
        <Drawing />
        <div className="absolute right-[8px] top-[8px] flex items-center gap-[7px]">
          <button type="button" aria-label="最小化图形" className="h-[8px] w-[8px] border-b-2 border-white" />
          <button type="button" aria-label="还原图形">
            <Icon w={8} h={8}>
              <path d="M3 1H7V5M1 3H5V7H1Z" stroke="#fff" strokeWidth="1.500" />
            </Icon>
          </button>
          <button type="button" aria-label="关闭图形窗口">
            <Icon w={7} h={7}>
              <path d="M0.500 0.500L6.500 6.500M6.500 0.500L0.500 6.500" stroke="#fff" strokeWidth="2" />
            </Icon>
          </button>
        </div>
        <ViewCube />
        <NavigationBar />

        {/* Dynamic input next to the crosshair */}
        <span className="absolute left-[674px] top-[129px] text-[10px] font-bold leading-[14px] text-white">?</span>
        <input
          aria-label="动态输入"
          defaultValue="O"
          className="absolute left-[682px] top-[156px] h-[16px] w-[36px] border border-[#555] bg-[#c9edcb] px-[2px] text-[9px] text-[#333]"
        />
        <span className="absolute left-[12px] top-[323px] font-['Liberation_Sans',sans-serif] text-[14px] leading-[14px] text-[#ccc]">Y</span>

        <span className="absolute left-[42px] top-[354px] bg-[#4a4a4a] px-px font-['DejaVu_Sans_Mono','Noto_Sans_CJK_SC',monospace] text-[9px] leading-[11px] text-[#c9c9c9]">
          命令: AREA
        </span>

        {/* Watermark, its right part runs under the brand box */}
        <div className="absolute left-[766px] top-[321px] w-[34px] overflow-hidden text-[#b9b9b9]">
          <p className="font-['Liberation_Sans',sans-serif] text-[40px] font-bold leading-[42px]">Ba</p>
          <p className="pl-[3px] font-['Open_Sans',sans-serif] text-[20px] leading-[22px]">jing</p>
        </div>
        <svg className="absolute left-[840px] top-[302px]" width="34" height="20" aria-hidden="true">
          <ellipse cx="8" cy="10" rx="6" ry="8" fill="#b0b0b0" />
          <ellipse cx="23" cy="11" rx="7" ry="8" fill="#b0b0b0" />
        </svg>
        <CommandLine />
      </div>
      <div className="w-[6px] shrink-0 border-l border-r border-l-[#e8f2fb] border-r-[#1d5163] bg-[#a9c6e6]" />
    </main>
  );
}

/* ---------- Status bar ---------- */

function StatusBar() {
  return (
    <footer className="flex h-[20px] items-start justify-between bg-[#383838] pl-[9px] text-[#b5b5b5]">
      <div className="flex">
        <button type="button" className="h-[13px] w-[34px] rounded-b-md bg-gradient-to-b from-[#6a6a6a] to-[#8d8d8d] font-bold leading-[13px] text-white [clip-path:polygon(0_0,100%_0,84%_100%,18%_100%)]">
          模型
        </button>
        <button type="button" className="h-[13px] w-[40px] bg-[#555] leading-[13px] [clip-path:polygon(0_0,100%_0,86%_100%,15%_100%)]">布局1</button>
        <button type="button" className="h-[13px] w-[40px] bg-[#555] leading-[13px] [clip-path:polygon(0_0,100%_0,86%_100%,15%_100%)]">布局2</button>
        <button type="button" aria-label="新建布局" className="ml-[2px] flex h-[12px] w-[17px] items-center justify-center rounded-b bg-[#505050]">
          <Icon w={7} h={7}>
            <path d="M3.500 0V7M0 3.500H7" />
          </Icon>
        </button>
      </div>
      <div className="flex h-full w-[425px] items-center border border-[#6c6c6c] bg-[#4b4b4b]">
        <button type="button" className="w-[22px] font-bold text-white">模型</button>
        <button type="button" aria-label="栅格" className="flex h-[17px] w-[17px] items-center justify-center bg-[#5590cc]">
          <Icon w={12} h={12}>
            <path d="M2.500 0V12M6.500 0V12M10.500 0V12M0 1.500H12M0 5.500H12M0 9.500H12" stroke="#e9f2fb" />
          </Icon>
        </button>
        <button type="button" aria-label="捕捉" className="flex w-[31px] items-center justify-center gap-[7px]">
          <Icon w={11} h={11}>
            <path d="M1 2H11M1 5.500H11M1 9H11" strokeWidth="1.500" strokeDasharray="2 2" />
          </Icon>
          <Caret />
        </button>
        <button type="button" aria-label="正交" className="flex h-full w-[20px] items-center justify-center border-l border-[#6c6c6c]">
          <Icon w={12} h={12}>
            <path d="M1.500 0V11.500H12M1.500 7.500H5.500V11.500" />
          </Icon>
        </button>
        <button type="button" aria-label="极轴追踪" className="flex w-[29px] items-center justify-center gap-[5px]">
          <Icon w={12} h={12}>
            <circle cx="6" cy="6" r="4.500" />
            <path d="M6 6H12M6 6L10 1" />
          </Icon>
          <Caret />
        </button>
        <button type="button" aria-label="等轴测草图" className="flex w-[27px] items-center justify-center gap-[8px]">
          <Icon w={11} h={12}>
            <path d="M5.500 0V12" stroke="#55bd68" />
            <path d="M0 1L11 11" stroke="#db5555" />
            <path d="M3 11L5 8" />
          </Icon>
          <Caret />
        </button>
        <button type="button" aria-label="对象捕捉追踪" className="flex h-full w-[18px] items-center justify-center border-l border-[#6c6c6c]">
          <Icon w={12} h={12}>
            <path d="M11 1L1 9.500H12" />
            <path d="M0 8H3V11H0Z" fill={GREY} stroke="none" />
          </Icon>
        </button>
        <button type="button" aria-label="对象捕捉" className="flex w-[28px] items-center justify-center gap-[5px]">
          <Icon w={12} h={12}>
            <path d="M2.500 2.500H11.500V11.500H2.500Z" />
            <path d="M0.500 0.500H4V4H0.500Z" stroke="#d69873" fill="#4b4b4b" />
          </Icon>
          <Caret />
        </button>
        <button type="button" aria-label="线宽显示" className="flex h-full w-[19px] items-center justify-center border-x border-[#6c6c6c]">
          <Icon w={12} h={12}>
            <path d="M0 1.500H12" />
            <path d="M0 5H7M0 10H7" strokeWidth="2" />
            <path d="M8 5.500H12M8 9.500H12" />
          </Icon>
        </button>
        <button type="button" aria-label="注释可见性" className="ml-[2px] flex h-[17px] w-[17px] items-center justify-center bg-[#5590cc]">
          <Icon w={12} h={12}>
            <path d="M5 0H7V4L11 11H8L6 7L4 11H0L4 4Z" fill="#fff" stroke="none" />
          </Icon>
        </button>
      </div>
    </footer>
  );
}

function BrandOverlay() {
  return (
    <aside className="absolute bottom-0 right-0 flex h-[95px] w-[200px] items-start gap-[8px] bg-[#223055] pl-[12px] pt-[19px] text-[#d4d4d4]">
      <svg width="44" height="59" viewBox="0 0 44 59" className="shrink-0" aria-hidden="true">
        <path
          d="M4 7L8 9C10 8 12 9 13 11L17 13L17 15L12 16C12 22 15 26 20 29C26 31 33 30 37 35C39 39 38 43 37 46L39 57H34L33 50L29 42C23 44 17 43 14 41L12 48L11 57H7L8 44C4 40 1 36 1 29C1 23 5 19 6 14L4 10Z"
          fill="#d0d0d0"
        />
        <path
          d="M12 9C16 8 20 10 26 10C34 10 39 8 43 3M13 9C11 7 11 5 12 2M18 9C15 7 15 4 18 1M23 10C20 7 20 4 23 1M23 5L26 4M17 5L20 4M30 10C28 7 29 5 32 4M36 8C35 6 36 5 38 4"
          fill="none"
          stroke="#d0d0d0"
          strokeWidth="1.300"
        />
      </svg>
      <div className="flex flex-col pt-[2px]">
        <div className="flex h-[34px] items-center">
          <span className="font-['Roboto',sans-serif] text-[36px] leading-[34px]">3D</span>
          <span className="font-['Noto_Sans_CJK_SC',sans-serif] text-[27px] font-medium leading-[34px]">溜溜网</span>
        </div>
        <span className="font-['Inter',sans-serif] text-[23px] leading-[24px]">3D66.COM</span>
      </div>
    </aside>
  );
}

export default function App() {
  return (
    <div className="relative flex min-h-screen flex-col overflow-hidden bg-[#383838] font-['Noto_Sans','Noto_Sans_CJK_SC',sans-serif] text-[9px] leading-[13px] text-[#eee]">
      <Header />
      <div className="flex h-[72px] overflow-hidden border-b border-[#333] bg-gradient-to-b from-[#505050] to-[#343434] pl-px">
        <DrawPanel />
        <ModifyPanel />
        <AnnotatePanel />
        <LayersPanel />
        <BlockPanel />
        <PropertiesPanel />
        <TrailingPanels />
      </div>
      <FileTabs />
      <Canvas />
      <StatusBar />
      <div className="flex h-[3px] bg-[#a9bfd6]">
        <span className="ml-[90px] w-[115px] border-x border-[#555] bg-[#e5edf5]" />
        <span className="ml-[48px] w-[116px] border-x border-[#555] bg-[#dfe8f2]" />
        <span className="w-[117px] border-x border-[#555] bg-white" />
      </div>

      {/* Floating assistant ball, half hidden by the brand box */}
      <span className="absolute bottom-[78px] right-[-13px] h-[26px] w-[26px] rounded-full border-2 border-white bg-[#5cc777]" />
      <BrandOverlay />
    </div>
  );
}
